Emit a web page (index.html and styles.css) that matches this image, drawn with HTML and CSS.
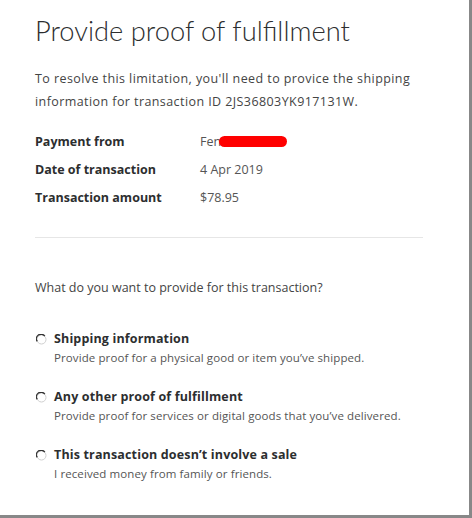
FILE: index.html
```html
<!DOCTYPE html>
<html>
<head>
<meta charset="utf-8">
<link rel="stylesheet" href="styles.css">
</head>
<body>
<div class="frame">
  <div class="content">
    <h1 class="title">Provide proof of fulfillment</h1>
    <p class="intro">To resolve this limitation, you'll need to provice the shipping information for transaction ID 2JS36803YK917131W.</p>
    <div class="details">
      <div class="label">Payment from</div>
      <div class="value">Fen<span class="redact"></span></div>
      <div class="label">Date of transaction</div>
      <div class="value">4 Apr 2019</div>
      <div class="label">Transaction amount</div>
      <div class="value">$78.95</div>
    </div>
    <hr class="divider">
    <p class="question">What do you want to provide for this transaction?</p>
    <div class="options">
      <div class="option">
        <svg class="radio" width="11" height="11" viewBox="0 0 11 11"><circle cx="5.5" cy="5.5" r="4.5" fill="#fff" stroke="#cfcfcf" stroke-width="1"/><path d="M1.2 7.4 A4.5 4.5 0 0 1 8.8 2.2" fill="none" stroke="#333" stroke-width="1.4"/></svg>
        <div class="opt-text">
          <div class="opt-title">Shipping information</div>
          <div class="opt-desc">Provide proof for a physical good or item you’ve shipped.</div>
        </div>
      </div>
      <div class="option">
        <svg class="radio" width="11" height="11" viewBox="0 0 11 11"><circle cx="5.5" cy="5.5" r="4.5" fill="#fff" stroke="#cfcfcf" stroke-width="1"/><path d="M1.2 7.4 A4.5 4.5 0 0 1 8.8 2.2" fill="none" stroke="#333" stroke-width="1.4"/></svg>
        <div class="opt-text">
          <div class="opt-title">Any other proof of fulfillment</div>
          <div class="opt-desc">Provide proof for services or digital goods that you’ve delivered.</div>
        </div>
      </div>
      <div class="option">
        <svg class="radio" width="11" height="11" viewBox="0 0 11 11"><circle cx="5.5" cy="5.5" r="4.5" fill="#fff" stroke="#cfcfcf" stroke-width="1"/><path d="M1.2 7.4 A4.5 4.5 0 0 1 8.8 2.2" fill="none" stroke="#333" stroke-width="1.4"/></svg>
        <div class="opt-text">
          <div class="opt-title">This transaction doesn’t involve a sale</div>
          <div class="opt-desc">I received money from family or friends.</div>
        </div>
      </div>
    </div>
  </div>
</div>
</body>
</html>
```
FILE: styles.css
```css
html, body {
  margin: 0;
  padding: 0;
  background: #ffffff;
}
.frame {
  width: 472px;
  height: 518px;
  box-sizing: border-box;
  border-right: 3px solid #888;
  border-bottom: 3px solid #888;
  background: #fff;
  overflow: hidden;
}
.content {
  padding: 15px 0 0 35px;
  width: 388px;
  font-family: "Open Sans", "Noto Sans", sans-serif;
  color: #2c2e2f;
}
.title {
  margin: 0;
  font-family: "Lato", sans-serif;
  font-weight: 300;
  font-size: 27.3px;
  line-height: 32px;
  color: #2c2e2f;
}
.intro {
  margin: 20px 0 0;
  font-size: 12.5px;
  line-height: 23px;
  letter-spacing: 0.42px;
  color: #444;
}
.details {
  margin-top: 20px;
  display: grid;
  grid-template-columns: 165px auto;
  row-gap: 10px;
  font-size: 12.5px;
  line-height: 18px;
}
.label {
  font-weight: 700;
  color: #2c2e2f;
}
.value {
  color: #555;
}
.redact {
  display: inline-block;
  width: 68px;
  height: 11px;
  background: #ff0000;
  border-radius: 6px;
  vertical-align: -1px;
  margin-left: -2px;
}
.divider {
  margin: 30px 0 0;
  border: 0;
  border-top: 1px solid #e6e6e6;
  width: 388px;
}
.question {
  margin: 41px 0 0;
  font-size: 12.5px;
  line-height: 18px;
  color: #444;
}
.options {
  margin-top: 33px;
  display: flex;
  flex-direction: column;
  gap: 21px;
}
.option {
  display: flex;
  gap: 7px;
  align-items: flex-start;
}
.radio {
  margin-top: 4px;
  margin-left: 1px;
  flex: none;
}
.opt-title {
  font-weight: 700;
  font-size: 12.5px;
  line-height: 18px;
  letter-spacing: 0.15px;
  color: #2c2e2f;
}
.opt-desc {
  font-size: 11.5px;
  line-height: 18px;
  letter-spacing: 0.1px;
  color: #555;
  margin-top: 1px;
}
```
